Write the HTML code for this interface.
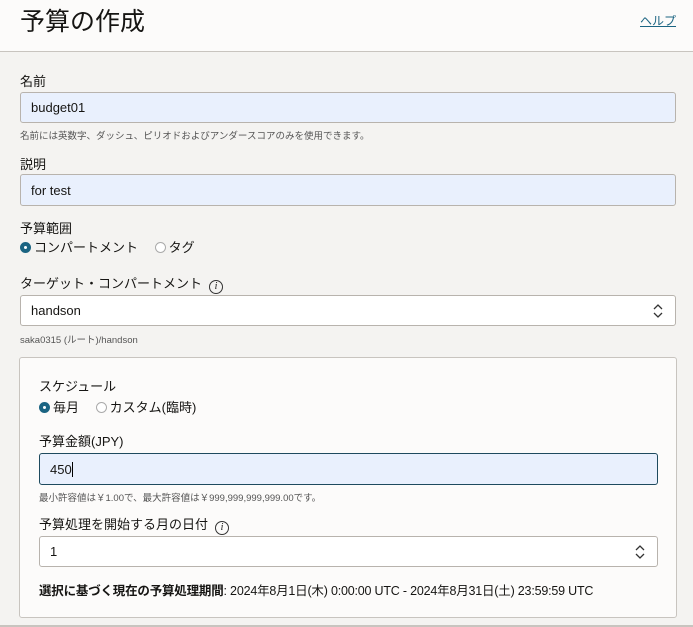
<!DOCTYPE html><html><head><meta charset="utf-8"><style>
*{box-sizing:border-box;margin:0;padding:0}
body{width:693px;height:627px;overflow:hidden;background:#f4f3f1;font-family:"Liberation Sans","Noto Sans CJK JP",sans-serif;color:#161513;position:relative}
.a{position:absolute}
.hdr{left:0;top:0;width:693px;height:52px;background:#fcfbfa;border-bottom:1px solid #c8c4bf}
.lbl{font-size:13px;color:#161513}
.hint{font-size:9.5px;color:#555}
.inp{border:1px solid #b8b3ad;border-radius:3px;background:#e9f0fd;font-size:13px;padding-left:10px;display:flex;align-items:center}
.sel{background:#fff}
.rad{display:inline-block;width:11px;height:11px;border-radius:50%;border:1px solid #aaa;background:#fff;vertical-align:-1px;margin-right:3px}
.on{background:#1b6482;border-color:#1b6482;position:relative}
.on:after{content:"";position:absolute;left:3px;top:3px;width:3px;height:3px;border-radius:50%;background:#fff}
.info{display:inline-block;width:14px;height:14px;border:1px solid #333;border-radius:50%;font-size:10px;text-align:center;line-height:12px;font-style:italic;font-family:"Liberation Serif",serif;margin-left:7px;vertical-align:-1px}
.chev{position:absolute;right:12px;top:8px}
</style></head><body>
<div class="a hdr"></div>
<div class="a" style="left:20px;top:2px;font-size:25px">予算の作成</div>
<div class="a" style="left:640px;top:12px;font-size:12px;color:#1b6482;text-decoration:underline">ヘルプ</div>
<div class="a lbl" style="left:20px;top:71px">名前</div>
<div class="a inp" style="left:20px;top:92px;width:656px;height:31px">budget01</div>
<div class="a hint" style="left:20px;top:128px">名前には英数字、ダッシュ、ピリオドおよびアンダースコアのみを使用できます。</div>
<div class="a lbl" style="left:20px;top:154px">説明</div>
<div class="a inp" style="left:20px;top:174px;width:656px;height:32px">for test</div>
<div class="a lbl" style="left:20px;top:218px">予算範囲</div>
<div class="a lbl" style="left:20px;top:237px"><span class="rad on"></span>コンパートメント　 <span class="rad"></span>タグ</div>
<div class="a lbl" style="left:20px;top:273px">ターゲット・コンパートメント<span class="info">i</span></div>
<div class="a inp sel" style="left:20px;top:295px;width:656px;height:31px">handson<svg class="chev" width="10" height="14" viewBox="0 0 10 14"><path d="M1 5l4-4 4 4M1 9l4 4 4-4" fill="none" stroke="#333" stroke-width="1.3"/></svg></div>
<div class="a hint" style="left:20px;top:332px">saka0315 (ルート)/handson</div>
<div class="a" style="left:19px;top:357px;width:658px;height:261px;background:#fcfbfa;border:1px solid #c8c4bf;border-radius:3px"></div>
<div class="a lbl" style="left:39px;top:376px">スケジュール</div>
<div class="a lbl" style="left:39px;top:397px"><span class="rad on"></span>毎月　 <span class="rad"></span>カスタム(臨時)</div>
<div class="a lbl" style="left:39px;top:431px">予算金額(JPY)</div>
<div class="a inp" style="left:39px;top:453px;width:619px;height:32px;border:1.5px solid #1e4a5e">450<span style="display:inline-block;width:1px;height:15px;background:#000"></span></div>
<div class="a hint" style="left:39px;top:490px">最小許容値は￥1.00で、最大許容値は￥999,999,999,999.00です。</div>
<div class="a lbl" style="left:39px;top:514px">予算処理を開始する月の日付<span class="info">i</span></div>
<div class="a inp sel" style="left:39px;top:536px;width:619px;height:31px">1<svg class="chev" width="10" height="14" viewBox="0 0 10 14"><path d="M1 5l4-4 4 4M1 9l4 4 4-4" fill="none" stroke="#333" stroke-width="1.3"/></svg></div>
<div class="a lbl" style="left:39px;top:580px;font-size:12.5px;letter-spacing:-0.2px"><b>選択に基づく現在の予算処理期間</b>: 2024年8月1日(木) 0:00:00 UTC - 2024年8月31日(土) 23:59:59 UTC</div>
<div class="a" style="left:0;top:625px;width:693px;height:2px;background:#c8c4bf"></div>
</body></html>
